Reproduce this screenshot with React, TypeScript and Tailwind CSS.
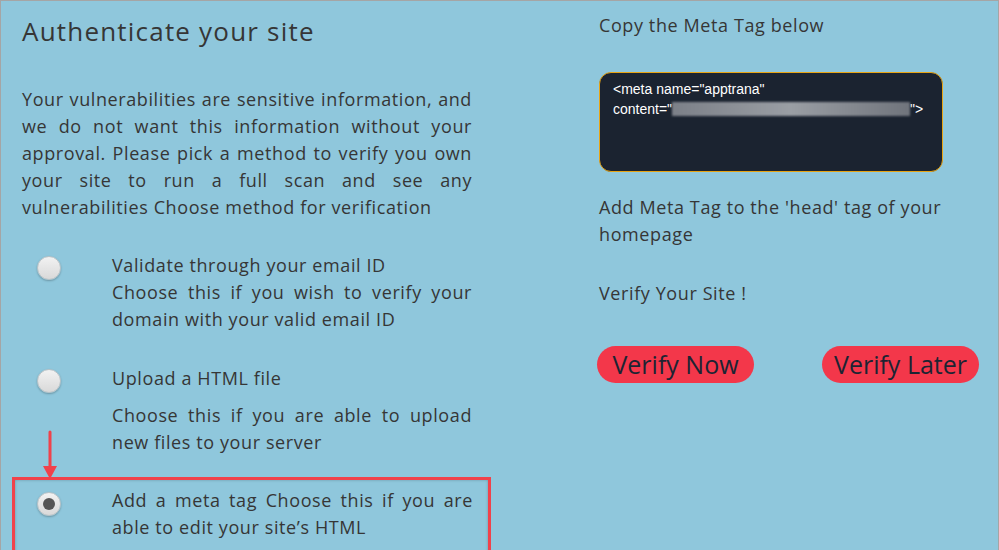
import React from "react";

const methods = [
  {
    title: "Validate through your email ID",
    desc: "Choose this if you wish to verify your domain with your valid email ID",
    gap: false,
  },
  {
    title: "Upload a HTML file",
    desc: "Choose this if you are able to upload new files to your server",
    gap: true,
  },
];

function Radio({ checked }: { checked?: boolean }) {
  return (
    <div className="w-[24px] h-[24px] rounded-full border border-[#b9c2c6] bg-gradient-to-b from-[#f2f2f2] to-[#d9d9d9] shadow-[0_1px_2px_rgba(0,0,0,0.25)] flex items-center justify-center shrink-0">
      {checked && <div className="w-[12px] h-[12px] rounded-full bg-[#555]" />}
    </div>
  );
}

export default function App() {
  return (
    <div
      className="relative w-[999px] h-[550px] overflow-hidden bg-[#8fc7dc] border-t border-l border-r border-[#a5a5a5] text-[#363636] flex"
      style={{ fontFamily: "'Open Sans', 'Noto Sans', sans-serif" }}
    >
      {/* left column */}
      <div className="ml-[21px] w-[450px] pt-[14px]">
        <h1 className="text-[26px] leading-[32px] tracking-[1.2px]">Authenticate your site</h1>
        <p className="mt-[39px] text-[18px] leading-[27px] tracking-[0.6px] text-justify">
          Your vulnerabilities are sensitive information, and we do not want this information without your
          approval. Please pick a method to verify you own your site to run a full scan and see any
          vulnerabilities Choose method for verification
        </p>

        <div className="mt-[31px] flex flex-col gap-[32px]">
          {methods.map((m) => (
            <div key={m.title} className="flex">
              <div className="w-[90px] pl-[15px] pt-[4px]">
                <Radio />
              </div>
              <div className="flex-1 text-[18px] leading-[27px] tracking-[0.6px] text-justify">
                <div>{m.title}</div>
                <div className={m.gap ? "mt-[10px]" : ""}>{m.desc}</div>
              </div>
            </div>
          ))}
        </div>

        <div className="-ml-[10px] mt-[21px] w-[479px] h-[80px] border-[3px] border-[#f0424b] shadow-[inset_0_0_3px_rgba(0,0,0,0.25)] pt-[7px] pr-[15px] flex">
          <div className="w-[97px] pl-[22px] pt-[5px]">
            <Radio checked />
          </div>
          <div className="flex-1 text-[18px] leading-[27px] tracking-[0.6px] text-justify">
            Add a meta tag Choose this if you are able to edit your site’s HTML
          </div>
        </div>
      </div>

      {/* annotation arrow */}
      <svg className="absolute left-[40px] top-[429px]" width="18" height="50" viewBox="0 0 18 50">
        <line x1="9" y1="2" x2="9" y2="38" stroke="#f0424b" strokeWidth="3" strokeLinecap="round" />
        <polygon points="2,36 16,36 9,49" fill="#f0424b" />
      </svg>

      {/* right column */}
      <div className="ml-[127px] w-[390px] pt-[11px] tracking-[0.6px]">
        <div className="text-[18px] leading-[27px]">Copy the Meta Tag below</div>
        <div
          className="mt-[33px] w-[344px] h-[100px] rounded-[12px] border border-[#e8a413] bg-[#1b2330] text-white text-[14px] leading-[20px] tracking-normal pt-[6px] px-[13px]"
          style={{ fontFamily: "'Liberation Sans', Arial, sans-serif" }}
        >
          <div>&lt;meta name="apptrana"</div>
          <div className="flex items-center">
            <span>content="</span>
            <span className="inline-block w-[238px] h-[14px] bg-gradient-to-r from-[#7c8088] via-[#9a9ea4] to-[#70747c] blur-[1px]" />
            <span>"&gt;</span>
          </div>
        </div>
        <div className="mt-[22px] w-[350px] text-[18px] leading-[27px]">
          Add Meta Tag to the 'head' tag of your homepage
        </div>
        <div className="mt-[32px] text-[18px] leading-[27px]">Verify Your Site !</div>
        <div className="mt-[39px] -ml-[2px] flex gap-[68px] tracking-normal">
          <button className="w-[157px] h-[37px] rounded-full bg-[#f3374a] text-[#1c2433] text-[25px] leading-[37px]">
            Verify Now
          </button>
          <button className="w-[157px] h-[37px] rounded-full bg-[#f3374a] text-[#1c2433] text-[25px] leading-[37px]">
            Verify Later
          </button>
        </div>
      </div>
    </div>
  );
}
